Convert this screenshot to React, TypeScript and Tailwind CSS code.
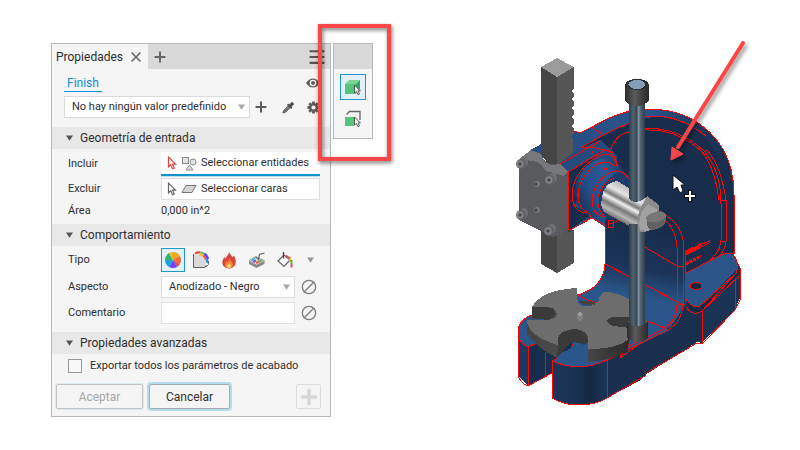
import React from "react";
import { Menu, Plus, Ban, X } from "lucide-react";

function Caret({ className = "" }: { className?: string }) {
  return (
    <svg viewBox="0 0 8 6" className={`pointer-events-none h-[6px] w-[7px] shrink-0 ${className}`}>
      <path d="M0 0h8L4 6z" fill="currentColor" />
    </svg>
  );
}

function CursorIcon({ color }: { color: string }) {
  return (
    <svg viewBox="0 0 10 14" className="h-[14px] w-[10px] shrink-0">
      <path
        d="M1.5 1.2v9.6l2.2-2 1.8 4 1.8-.9-1.8-3.7h3z"
        fill="#fff"
        stroke={color}
        strokeWidth="1.2"
      />
    </svg>
  );
}

function ShapesIcon() {
  return (
    <svg viewBox="0 0 16 15" className="h-[15px] w-4 shrink-0" fill="#e4e4e4" stroke="#8a8a8a">
      <rect x="1.5" y="1.5" width="6" height="6" />
      <circle cx="12" cy="6" r="3" />
      <path d="M8.500 9l3.500 5H5z" />
    </svg>
  );
}

function FaceIcon() {
  return (
    <svg viewBox="0 0 16 10" className="h-[10px] w-4 shrink-0">
      <path d="M5 1.5h10l-4 7H1z" fill="#d4d4d4" stroke="#777" />
    </svg>
  );
}

function EyeIcon() {
  return (
    <svg viewBox="0 0 14 10" className="h-[10px] w-[14px]">
      <path d="M0 5q3-4.500 7-4.500T14 5q-3 4.500-7 4.500T0 5z" fill="#5c5c5c" />
      <circle cx="7" cy="5" r="3.300" fill="#f5f5f5" />
      <circle cx="7" cy="5" r="2" fill="#5c5c5c" />
    </svg>
  );
}

function DropperIcon() {
  return (
    <svg viewBox="0 0 14 14" className="h-[13px] w-[13px]">
      <path d="M1 13l1-3 5-5 2 2-5 5z" fill="#777" stroke="#5c5c5c" />
      <path d="M6 3.500L10.500 8" stroke="#4f4f4f" strokeWidth="2" />
      <path d="M8.500 5.500L12 2" stroke="#4f4f4f" strokeWidth="3.500" />
    </svg>
  );
}

function GearIcon() {
  return (
    <svg viewBox="0 0 14 14" className="h-[13px] w-[13px]">
      <g stroke="#5c5c5c" strokeWidth="3">
        <path d="M7 .5v13M.5 7h13M2.4 2.4l9.2 9.2M11.6 2.4l-9.2 9.2" />
      </g>
      <circle cx="7" cy="7" r="4.6" fill="#5c5c5c" />
      <circle cx="7" cy="7" r="2.2" fill="#f5f5f5" />
    </svg>
  );
}

function ColorWheelIcon() {
  const slices = [
    { d: "M9 9V1A8 8 0 0 1 15.9 5z", fill: "#f7a21b" },
    { d: "M9 9l6.9-4a8 8 0 0 1 0 8z", fill: "#f0693c" },
    { d: "M9 9l6.9 4A8 8 0 0 1 13 15.900z", fill: "#dd4a4f" },
    { d: "M9 9l4 6.9a8 8 0 0 1-8 0z", fill: "#6a42f0" },
    { d: "M9 9l-4 6.9A8 8 0 0 1 1 9z", fill: "#1aa3d8" },
    { d: "M9 9H1A8 8 0 0 1 5 2.1z", fill: "#34b567" },
    { d: "M9 9L5 2.1A8 8 0 0 1 9 1z", fill: "#e8b92c" },
  ];
  return (
    <svg viewBox="0 0 18 18" className="h-[18px] w-[18px]">
      {slices.map((s) => (
        <path key={s.fill} d={s.d} fill={s.fill} />
      ))}
    </svg>
  );
}

function CoatingIcon() {
  return (
    <svg viewBox="0 0 18 18" className="h-[18px] w-[18px]" fill="none">
      <path d="M1.500 3.500h5Q13 4.500 14 11l-1.500 5.500h-11z" fill="#dadada" />
      <path d="M1.500 3v13.500H12.500L14.500 14" stroke="#606060" />
      <path d="M3 2.500Q5.500 1 8.500 1.500" stroke="#e0483c" strokeWidth="2" />
      <path d="M7 3q2.500.2 4 1.500" stroke="#f3c11f" strokeWidth="2.500" />
      <path d="M8.500 1.300q2.500.2 4.500 2" stroke="#43b45c" strokeWidth="1.500" />
      <path d="M11 4.500q2 1.500 3 4" stroke="#ee5a3c" strokeWidth="2" />
      <path d="M12.500 2.800q2.500 2 3.500 5.200" stroke="#6a42f0" strokeWidth="2.500" />
      <path d="M14.500 8l1.500 4" stroke="#2b8fe0" strokeWidth="2.500" />
      <path d="M16.500 10v3.500l-3 3" stroke="#707070" />
    </svg>
  );
}

function FlameIcon() {
  return (
    <svg viewBox="0 0 16 18" className="h-[18px] w-4">
      <path
        d="M8 .5c.5 3 3 4 3.500 6l1.300-2c2.500 4 2.700 8 .2 11-2.500 2.500-7.500 2.500-10 0C.5 13 1 9 3.500 6l.8 2C5 5 8 4.500 8 .5z"
        fill="#d9453c"
      />
      <path d="M8.500 7c0 2.500 3.500 4 3.500 7 0 2-1.700 3.200-4 3.200S4 16 4 14c0-1.600 1-2.500 1.500-4l1.500 1.500C8 10 8 8.500 8.500 7z" fill="#f58a32" />
      <path d="M8 12c.5 1 2 1.800 2 3.300 0 1-.8 1.700-2 1.700s-2-.7-2-1.700S7.700 13.500 8 12z" fill="#ffd27a" />
    </svg>
  );
}

function MachiningIcon() {
  return (
    <svg viewBox="0 0 18 18" className="h-[18px] w-[18px]" fill="none">
      <path d="M1 10l7.500 4 8-4v3l-8 4-7.500-4z" fill="#8a8a8a" />
      <path d="M1 9.500l6-3.500 9.500 3.500-8 4.500z" fill="#e2e2e2" stroke="#888" strokeWidth=".8" />
      <path d="M3.500 9.500l3.500-2" stroke="#35c1cf" strokeWidth="2" />
      <path d="M5 11l3-1.500" stroke="#7a4cf0" strokeWidth="2" />
      <path d="M8 12l3-1.500" stroke="#f0603c" strokeWidth="2" />
      <path d="M11 10.500l3-1.500" stroke="#57c04d" strokeWidth="2" />
      <path d="M7.500 5.500l3 3 1-5L16.500 2" stroke="#666" strokeWidth="1.300" />
    </svg>
  );
}

function PaintIcon() {
  return (
    <svg viewBox="0 0 18 18" className="h-[18px] w-[18px]" fill="none">
      <path d="M2 10l6-6 6 5-6 6.500z" fill="#f7f7f7" stroke="#666" strokeWidth="1.200" />
      <path d="M7.500 1v6.500" stroke="#444" strokeWidth="1.300" />
      <path d="M9.500 4.500l5 3" stroke="#e5483e" strokeWidth="1.500" />
      <path d="M14 7v4" stroke="#f3a81f" strokeWidth="2" />
      <path d="M15.500 9v4" stroke="#4db848" strokeWidth="2" />
      <path d="M15.500 13v3.500" stroke="#d5506e" strokeWidth="2" />
    </svg>
  );
}

function CubeIcon({ solid }: { solid: boolean }) {
  return (
    <svg viewBox="0 0 18 18" className="h-[18px] w-[18px]" fill="none">
      {solid ? (
        <>
          <path d="M1 6l4-4h11l-4 4z" fill="#7ad494" />
          <path d="M12 6l4-4v9l-4 4z" fill="#36a860" />
        </>
      ) : (
        <path d="M2.500 4.500l3-3h10.500V10" stroke="#666" strokeWidth="1.300" />
      )}
      <path d={solid ? "M1 6h11v10H1z" : "M1 7h9.500v9H1z"} fill="#55c57c" />
      <path d="M10.500 7v8l1.900-1.600 1.600 3.300 1.500-.8-1.500-3h2.400z" fill="#fff" stroke="#555" />
    </svg>
  );
}

function SectionHeader({ title }: { title: string }) {
  return (
    <h2 className="flex h-[22px] items-center gap-[7px] bg-[#e8e8e8] pl-[14px] text-[12px]">
      <Caret className="text-[#555]" />
      {title}
    </h2>
  );
}

function Row({ label, htmlFor, children }: { label: string; htmlFor?: string; children: React.ReactNode }) {
  return (
    <div className="flex items-center pl-4">
      <label htmlFor={htmlFor} className="w-[93px] shrink-0">
        {label}
      </label>
      {children}
    </div>
  );
}

const finishTypes = [
  { name: "Material", icon: <ColorWheelIcon />, selected: true },
  { name: "Recubrimiento", icon: <CoatingIcon /> },
  { name: "Tratamiento térmico", icon: <FlameIcon /> },
  { name: "Mecanizado", icon: <MachiningIcon /> },
  { name: "Pintura", icon: <PaintIcon /> },
];

function PropertiesPanel() {
  return (
    <section className="w-[280px] shrink-0 border border-[#b4b8b9] bg-[#f5f5f5] pb-[7px]">
      <header className="flex h-[25px] items-stretch bg-[#d9d9d9]">
        <div className="flex w-24 items-center justify-between bg-[#f5f5f5] pr-[4px] pl-1 text-[12px]">
          <span>Propiedades</span>
          <button aria-label="Cerrar">
            <X size={16} strokeWidth={2.5} color="#666" />
          </button>
        </div>
        <button aria-label="Nueva pestaña" className="ml-1">
          <Plus size={16} strokeWidth={3} color="#666" />
        </button>
        <button aria-label="Menú" className="mr-[3px] ml-auto">
          <Menu size={20} strokeWidth={2.5} color="#555" />
        </button>
      </header>

      <div className="flex h-[27px] items-center justify-between pr-[10px] pl-3">
        <a href="#finish" className="mt-[2px] border-b border-[#0696d7] px-[3px] text-[12px] leading-[15px] text-[#0e8fce]">
          Finish
        </a>
        <button aria-label="Visibilidad">
          <EyeIcon />
        </button>
      </div>

      <div className="flex items-center pl-3">
        <div className="relative flex h-[22px] w-[186px] items-center">
          <select
            aria-label="Valor predefinido"
            className="h-full w-full appearance-none border border-[#dcdcdc] bg-white pl-[7px] outline-none"
          >
            <option>No hay ningún valor predefinido</option>
          </select>
          <Caret className="absolute right-[5px] text-[#aaa]" />
        </div>
        <div className="flex flex-1 items-center justify-between pr-[10px] pl-[3px]">
          <button aria-label="Añadir">
            <Plus size={16} strokeWidth={3} color="#5c5c5c" />
          </button>
          <button aria-label="Cuentagotas">
            <DropperIcon />
          </button>
          <button aria-label="Configuración">
            <GearIcon />
          </button>
        </div>
      </div>

      <div className="mt-[9px]">
        <SectionHeader title="Geometría de entrada" />
        <div className="flex flex-col gap-[2px] pt-[3px]">
          <Row label="Incluir" htmlFor="include">
            <button
              id="include"
              className="flex h-6 w-[159px] items-center gap-1 border-b-2 border-[#1492cf] bg-white pl-[6px] shadow-[0_1px_0_#bfe0ef]"
            >
              <CursorIcon color="#e0403c" />
              <ShapesIcon />
              Seleccionar entidades
            </button>
          </Row>
          <Row label="Excluir" htmlFor="exclude">
            <button id="exclude" className="flex h-[22px] w-[159px] items-center gap-1 border border-[#dfdfdf] bg-white pl-[5px]">
              <CursorIcon color="#666" />
              <FaceIcon />
              Seleccionar caras
            </button>
          </Row>
          <Row label="Área" htmlFor="area">
            <output id="area" className="leading-[18px]">
              0,000 in^2
            </output>
          </Row>
        </div>
      </div>

      <div className="mt-1">
        <SectionHeader title="Comportamiento" />
        <div className="flex flex-col gap-1 pt-[2px]">
          <Row label="Tipo">
            <div className="flex items-center gap-1">
              {finishTypes.map((t) => (
                <button
                  key={t.name}
                  aria-label={t.name}
                  className={
                    t.selected
                      ? "flex h-6 w-6 items-center justify-center border border-[#1e96cf] bg-[#e3f0f8]"
                      : "flex h-6 w-6 items-center justify-center"
                  }
                >
                  {t.icon}
                </button>
              ))}
              <Caret className="ml-[6px] text-[#999]" />
            </div>
          </Row>
          <Row label="Aspecto" htmlFor="appearance">
            <div className="relative flex h-[22px] w-[134px] items-center">
              <select
                id="appearance"
                className="h-full w-full appearance-none border border-[#dcdcdc] bg-white pl-[7px] outline-none"
              >
                <option>Anodizado - Negro</option>
              </select>
              <Caret className="absolute right-[5px] text-[#aaa]" />
            </div>
            <button aria-label="Restablecer aspecto" className="ml-[6px]">
              <Ban size={16} strokeWidth={2} color="#7c7c7c" className="-scale-x-100" />
            </button>
          </Row>
          <Row label="Comentario" htmlFor="comment">
            <input id="comment" className="h-[22px] w-[134px] border border-[#e0e0e0] bg-white px-[6px] outline-none" />
            <button aria-label="Borrar comentario" className="ml-[6px]">
              <Ban size={16} strokeWidth={2} color="#7c7c7c" className="-scale-x-100" />
            </button>
          </Row>
        </div>
      </div>

      <div className="mt-2">
        <SectionHeader title="Propiedades avanzadas" />
        <label className="flex h-6 items-center gap-2 pl-4">
          <input type="checkbox" className="h-[14px] w-[14px] appearance-none border border-[#999] bg-[#f8f8f8]" />
          Exportar todos los parámetros de acabado
        </label>
      </div>

      <footer className="mt-[6px] flex items-center gap-[6px] pr-[9px] pl-1 text-[12px]">
        <button
          disabled
          className="h-[25px] w-[87px] rounded-[2px] border border-[#c0c4c6] text-[#a8a8a8] shadow-[0_0_0_1px_#dcebf2]"
        >
          Aceptar
        </button>
        <button className="h-[25px] w-[81px] rounded-[2px] border border-[#a2adb3] shadow-[0_0_0_2px_#b5dced]">
          Cancelar
        </button>
        <button
          disabled
          aria-label="Aplicar"
          className="ml-auto flex h-[25px] w-[25px] items-center justify-center rounded-[2px] border border-[#dcdcdc]"
        >
          <Plus size={22} strokeWidth={4} color="#d8d8d8" />
        </button>
      </footer>
    </section>
  );
}

function SelectionToolbar() {
  return (
    <aside className="relative ml-[2px] w-10 shrink-0 border border-[#b4b8b9] bg-[#f5f5f5] pb-[6px]">
      <div className="h-[25px] bg-[#d9d9d9]" />
      <div className="flex flex-col items-center gap-[6px] pt-[5px]">
        <button
          aria-label="Seleccionar cuerpo"
          className="flex h-[26px] w-[26px] items-center justify-center border border-[#1e96cf] bg-[#e3f0f8]"
        >
          <CubeIcon solid />
        </button>
        <button aria-label="Seleccionar cara" className="flex h-[26px] w-[26px] items-center justify-center">
          <CubeIcon solid={false} />
        </button>
      </div>
      <div className="pointer-events-none absolute -top-5 -left-4 h-[137px] w-[73px] border-4 border-[#fb4747] drop-shadow-[1px_2px_2px_rgba(0,0,0,0.55)]" />
    </aside>
  );
}

const bolts = [
  [521, 164],
  [550, 180],
  [521, 215],
  [549, 231],
];

function ArborPress() {
  return (
    <svg
      viewBox="500 30 260 390"
      className="w-full max-w-[260px]"
      role="img"
      aria-label="Prensa"
      shapeRendering="crispEdges"
    >
      <defs>
        <linearGradient id="rim" x1="580" y1="0" x2="734" y2="0" gradientUnits="userSpaceOnUse">
          <stop offset="0" stopColor="#284f85" />
          <stop offset=".45" stopColor="#2b558c" />
          <stop offset=".8" stopColor="#1b365c" />
          <stop offset="1" stopColor="#182c4a" />
        </linearGradient>
        <linearGradient id="front" x1="0" x2="1" y1="0" y2="0">
          <stop offset="0" stopColor="#1a3357" />
          <stop offset=".35" stopColor="#1b3456" />
          <stop offset=".7" stopColor="#142844" />
          <stop offset="1" stopColor="#1a3558" />
        </linearGradient>
        <linearGradient id="web" x1="650" y1="205" x2="625" y2="330" gradientUnits="userSpaceOnUse">
          <stop offset="0" stopColor="#162b49" />
          <stop offset=".5" stopColor="#1a3357" />
          <stop offset=".72" stopColor="#2a5589" />
          <stop offset="1" stopColor="#29568d" />
        </linearGradient>
        <linearGradient id="boss" x1="578" y1="215" x2="620" y2="165" gradientUnits="userSpaceOnUse">
          <stop offset="0" stopColor="#142a48" />
          <stop offset=".4" stopColor="#24508a" />
          <stop offset=".75" stopColor="#2a5a94" />
          <stop offset="1" stopColor="#18345a" />
        </linearGradient>
        <linearGradient id="pole" x1="629" x2="645" y1="0" y2="0" gradientUnits="userSpaceOnUse">
          <stop offset="0" stopColor="#303c46" />
          <stop offset=".25" stopColor="#506170" />
          <stop offset=".48" stopColor="#384854" />
          <stop offset=".6" stopColor="#8090a0" />
          <stop offset=".72" stopColor="#526475" />
          <stop offset="1" stopColor="#303b46" />
        </linearGradient>
        <linearGradient id="barrel" x1="631" y1="188" x2="614" y2="220" gradientUnits="userSpaceOnUse">
          <stop offset="0" stopColor="#bababa" />
          <stop offset=".25" stopColor="#e4e4e4" />
          <stop offset=".4" stopColor="#7a7a7a" />
          <stop offset=".5" stopColor="#f2f2f2" />
          <stop offset=".65" stopColor="#777" />
          <stop offset=".8" stopColor="#b8b8b8" />
          <stop offset="1" stopColor="#555" />
        </linearGradient>
        <linearGradient id="dark" x1="0" x2="1" y1="0" y2="0">
          <stop offset="0" stopColor="#2b2b2b" />
          <stop offset=".4" stopColor="#5a5a5a" />
          <stop offset="1" stopColor="#292929" />
        </linearGradient>
        <linearGradient id="edge" x1="527" x2="628" y1="0" y2="0" gradientUnits="userSpaceOnUse">
          <stop offset="0" stopColor="#444" />
          <stop offset=".28" stopColor="#4a4a4a" />
          <stop offset=".45" stopColor="#303030" />
          <stop offset=".6" stopColor="#464646" />
          <stop offset="1" stopColor="#2c2c2c" />
        </linearGradient>
        <filter id="shadow" x="-20%" y="-20%" width="140%" height="140%">
          <feDropShadow dx="2" dy="3" stdDeviation="2" floodOpacity=".45" />
        </filter>
      </defs>

      {/* casting, back plate */}
      <path
        d="M530 150L568 130L580 133L592 127Q620 110 647 109Q672 109 690 118Q734 142 734 195V262L686 320H605V227L592 218L568 231V172L557 166z"
        fill="url(#rim)"
      />
      <path d="M582 147Q616 127 640 119Q675 112 700 132Q728 160 729 204V260L686 282H606V165z" fill="#182d4b" />
      <path d="M605 215L640 228L682 240L684 305L670 330L630 350L585 315L577 296Q605 287 605 263z" fill="url(#web)" />
      <g fill="none" stroke="#ff0505" strokeWidth="1">
        <path d="M574 131L580 133L592 127Q620 110 647 109Q672 109 690 118Q734 142 734 195V254" />
        <path d="M592 127L602 134M582 147Q616 127 645 117Q675 112 706 136" />
        <path d="M610 151Q616 134 629 132M645 128Q680 128 704 151Q721 171 721 204V240Q720 260 686 276" />
        <path d="M645 130Q677 129 701 151Q714 164 719 200" />
        <path d="M703 153L707 150Q721 166 726 200V241Q724 262 686 280M721 200H726M721 241H726" />
      </g>

      {/* base */}
      <path
        d="M518 329Q519 321 532 315L578 295L592 288L650 318L670 328L686 305L733 254L740 267V298L735 309L702 343L697 342L645 375L641 380L607 398Q597 405 578 405Q560 404 552 398V373L545 377L528 386L519 377z"
        fill="#192f4e"
      />
      <path d="M518 329Q519 321 532 315L580 294L592 288L650 318L670 330L607 360Q580 372 552 361L572 347V340L535 344L528 347L520 341z" fill="#2a568c" />
      <path d="M605 262Q604 288 579 296L630 325L668 328Q680 318 680 303L640 281z" fill="url(#web)" />
      <path d="M552 361Q580 373 607 360V398Q597 405 578 405Q560 404 552 398z" fill="url(#front)" />
      <path d="M518 329Q518 343 528 347V386L519 377z" fill="#1c3a61" />
      <path d="M528 347L545 339L572 343L552 361V373L528 386z" fill="#162d4d" />
      <path d="M686 273L725 253Q733 252 738 263Q739 270 736 274L702 311Q692 311 686 299z" fill="#2b5489" />
      <path d="M686 302Q692 315 702 311L739 274V267L701 306Q692 310 686 299z" fill="#142947" />
      <path d="M702 312L739 277V298L735 309L702 343z" fill="#1a3355" />
      <g fill="none" stroke="#ff0505" strokeWidth="1">
        <path d="M577 296Q604 287 605 264V227M605 264L630 277M645 285L682 304M645 247L677 266M645 320L665 328M577 294L585 299L603 305" />
        <path d="M531 315Q518 321 518 332Q518 343 528 347L537 343M518 332V375Q520 383 528 386L552 373M528 347V385M545 352V376" />
        <path d="M552 361V398Q564 405 578 405Q596 405 607 398L645 376L646 373L697 343L702 344L735 310L740 300V268L733 254" />
        <path d="M552 361Q580 373 607 360L670 329Q682 320 683 305V240Q680 222 660 212M607 360V397" />
        <path d="M552 361Q573 352 573 342M620 358L630 342M620 358L642 342M620 358V351L665 328Q677 320 677 305V247Q676 225 657 214" />
        <path d="M685 250V303M686 273L725 253L733 254Q740 264 736 273L702 311V343M686 299Q691 308 700 306L735 274M686 307Q693 317 702 311L739 276M735 278V308M677 304H685M677 266H683" />
        <ellipse cx="696" cy="286" rx="6" ry="3.500" fill="#17263e" />
      </g>
      <g fill="none" stroke="#ff0505" strokeWidth="3">
        <path d="M685 253L693 248L695 249L701 244M686 254L700 247" />
        <path d="M686 264L701 256" strokeDasharray="3 1" />
      </g>
      <path d="M691 249L709 241V243L699 248" fill="none" stroke="#ff0505" strokeWidth="1" />

      {/* neck and boss */}
      <path d="M557 160L600 140L617 155L618 185L605 222L592 218L568 231V172z" fill="#244b7e" />
      <path d="M568 172L600 152L580 175L575 206L590 216L568 231z" fill="#172d4c" />
      <ellipse cx="601" cy="188" rx="25" ry="30" transform="rotate(24 601 188)" fill="url(#boss)" />
      <ellipse cx="617" cy="196" rx="17" ry="24" transform="rotate(24 617 196)" fill="#1c3d69" />
      <g fill="none" stroke="#ff0505" strokeWidth="1">
        <path d="M568 231V172L600 153Q607 148 613 153M568 231L592 218L606 226M560 164L600 141" />
        <path d="M588 213Q572 213 572 193Q574 174 592 160Q606 150 614 158L618 168M592 218L588 213" />
        <path d="M588 213Q577 207 578 193Q580 177 594 166Q607 158 616 167" />
        <path d="M605 217Q592 215 592 200Q594 181 611 172Q622 168 629 179M605 217Q596 208 598 197Q602 182 614 178" />
        <path d="M582 147H592L603 150Q614 149 618 168M595 157L592 151M608 220h5v7h-5zM608 223h5M613 223L620 220" />
        <path d="M603 169h4" strokeWidth="2" />
      </g>

      {/* rack */}
      <path d="M541 230H574V263L557 273L541 264z" fill="#464646" />
      <path d="M557 234L574 231V263L557 273z" fill="#565656" />
      <path d="M541 67L557 77V164H548L541 153z" fill="#454545" />
      <path
        d="M557 77L574 67V88L571 91L574 93V97L571 99L574 102V106L571 108L574 111V115L571 117L574 120V124L571 126L574 129V133L571 136L573 139V153L560 163L557 164z"
        fill="#565656"
      />
      <path d="M557 58L574 67L557 77L541 67z" fill="#9b9b9b" />

      {/* plate */}
      <path d="M519 160L532 151L541 153Q543 162 550 164L560 165L568 172V231L553 237L519 220z" fill="#595a5e" />
      <path d="M519 159L531 150L541 154Q544 163 551 165L560 164L568 171L564 176Q550 172 546 171Q540 161 532 161z" fill="#77787c" />
      <g shapeRendering="auto">
        {bolts.map(([x, y]) => (
          <g key={`${x}-${y}`}>
            <ellipse cx={x + 3} cy={y - 2} rx="4" ry="5" fill="#707175" />
            <circle cx={x} cy={y} r="5" fill="#626368" />
            <circle cx={x - 1} cy={y} r="3.500" fill="#85868a" />
            <circle cx={x - 1} cy={y} r="1.800" fill="#48494d" />
          </g>
        ))}
        <g fill="#77787c">
          <circle cx="537" cy="184" r="3" />
          <circle cx="537" cy="210" r="3" />
        </g>
        <g fill="#3e3f43">
          <circle cx="536" cy="184" r="1.500" />
          <circle cx="536" cy="210" r="1.500" />
        </g>
      </g>

      {/* turntable */}
      <path
        d="M527 320V333Q535 347 557 358L558 350Q566 338 588 337V362Q609 361 627 351L630 338V317L607 322L562 333L548 320L557 315V325H532V306L577 288V301H590L603 305L599 314z"
        fill="url(#edge)"
      />
      <path d="M558 347V338Q562 327 575 329Q587 332 588 341L584 346Q577 340 569 344L557 358z" fill="#3a3a3a" />
      <path d="M607 321Q610 315 630 317V327L612 326Q607 325 607 321z" fill="#3a3a3a" />
      <path d="M532 306L553 308Q558 315 548 320L532 318z" fill="#3a3a3a" />
      <path
        d="M532 307Q541 290 577 288V299Q580 305 590 305Q599 304 599 298L603 292Q619 292 630 300V317L612 317Q607 319 607 321Q608 325 614 326L630 328V338Q619 349 588 349V337Q585 329 573 329Q560 331 558 338V345Q527 336 527 320H548Q556 319 557 314Q556 308 548 307z"
        fill="#6d6d6d"
      />
      <path d="M577 299Q580 305 590 305Q599 304 599 299L596 304Q587 309 579 304z" fill="#29558b" />
      <path d="M577 314V319L580 321L583 319V314z" fill="#828282" />
      <path d="M577 314L580 312L583 314L580 316z" fill="#a0a0a0" />
      <path d="M558 360Q556 356 563 352Q576 347 572 343Q578 341 586 346V365Q574 368 558 360z" fill="#2b568c" />

      {/* ram handle */}
      <path d="M617 181Q604 183 602 197Q600 207 604 212L638 231L653 202z" fill="url(#barrel)" />
      <path d="M629 100H645V198Q641 202 634 202L629 199z" fill="url(#pole)" />
      <path d="M629 224H645V326H629z" fill="url(#pole)" />
      <path d="M638 232Q636 212 644 202L647 196L659 205Q661 214 655 228L645 232z" fill="#8b8b8b" />
      <path d="M640 230Q637 215 648 204L658 210Q658 224 648 231z" fill="#a2a2a2" />
      <path d="M647 217Q660 207 666 214V221Q663 229 652 230Q645 228 647 217z" fill="#626262" />
      <ellipse cx="656" cy="217" rx="10" ry="5" transform="rotate(-12 656 217)" fill="#777" />
      <path d="M627 322V338Q637 346 648 338V322z" fill="url(#dark)" />
      <path d="M627 322Q630 318 637 318Q646 318 648 322Q638 329 627 322z" fill="#555" />
      <path d="M629 316H645V324Q637 328 629 324z" fill="url(#pole)" />
      <path d="M625 86Q625 79 637 79Q649 79 649 86V100Q645 106 637 106Q628 106 625 100z" fill="url(#dark)" />
      <ellipse cx="637" cy="84.500" rx="9" ry="5" fill="#849eb6" stroke="#262c32" />

      <g filter="url(#shadow)" shapeRendering="auto">
        <path d="M743 43L678 147" stroke="#f94646" strokeWidth="4" strokeLinecap="round" />
        <path d="M671 160L672 147L683 154z" fill="#f94646" stroke="#f94646" />
      </g>
      <path d="M673 175V190L677 187L680 193L683 191L681 185H685z" fill="#fff" stroke="#111" shapeRendering="auto" />
      <path d="M688 190h3v4h4v3h-4v4h-3v-4h-4v-3h4z" fill="#fff" stroke="#111" />
    </svg>
  );
}

export default function App() {
  return (
    <main className="flex min-h-screen items-start bg-white pt-[43px] pl-[51px] font-[Roboto,sans-serif] text-[11px] text-[#2e2e2e]">
      <PropertiesPanel />
      <SelectionToolbar />
      <div className="-mt-[13px] flex flex-1 justify-end pr-10">
        <ArborPress />
      </div>
    </main>
  );
}
